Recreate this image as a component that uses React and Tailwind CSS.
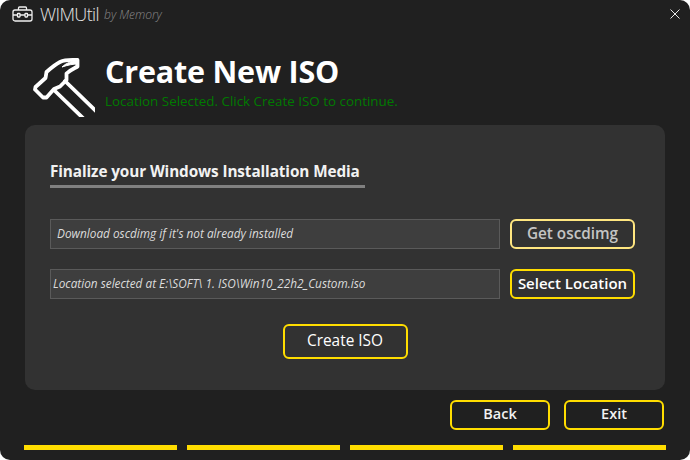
const font = { fontFamily: '"Open Sans", "Noto Sans", sans-serif' };

function Toolbox() {
  return (
    <svg className="mt-[-1px]" width="21" height="16" viewBox="0 0 21 16" fill="none" stroke="#f0f0f0" strokeWidth="1.3" strokeLinejoin="round">
      <rect x="1" y="4" width="19" height="11" rx="2" />
      <path d="M6.5 4V2a1 1 0 0 1 1-1h6a1 1 0 0 1 1 1V4" />
      <path d="M1 9h4.5M8 9h5M15.5 9H20" />
      <rect x="5.5" y="7.5" width="2.5" height="3.5" rx="0.5" />
      <rect x="13" y="7.5" width="2.5" height="3.5" rx="0.5" />
    </svg>
  );
}

function Hammer() {
  return (
    <svg className="block mt-[28px] shrink-0" width="65" height="61" viewBox="30 58 65 61" fill="none" stroke="#fff" strokeWidth="3.8" strokeLinejoin="round" strokeLinecap="round">
      <path d="M77.5 62 C70 61.5 64 62 60 64 C55 66.5 51 70 46.5 74 L45.5 80 L35.5 89 L35 91.5 L43 99.5 L46.5 99.5 L54 91 L60 88.5 L66.5 82 L66.5 75.5 C70 72 74 70.5 77.5 68.5 Z" />
      <path d="M77.5 62 C72 63 66 65 62 69 C68 67 73 66 77.5 66 Z" fill="#fff" strokeWidth="1" />
      <path d="M55 93 L85 122" />
      <path d="M65 83 L98 115" />
    </svg>
  );
}

function Btn({ children, className }) {
  return (
    <button className={"flex items-center justify-center rounded-[6px] border-2 font-semibold " + className} style={font}>
      {children}
    </button>
  );
}

export default function App() {
  return (
    <div className="w-[690px] h-[460px] bg-white overflow-hidden" style={font}>
      <div className="w-full h-full bg-[#202020] rounded-[10px] flex flex-col overflow-hidden">
        <div className="h-[28px] flex items-center pl-[12px] pr-[10px] shrink-0">
          <Toolbox />
          <span className="ml-[7px] text-[18px] font-light text-[#e4e4e4] tracking-[-0.6px]">WIMUtil</span>
          <span className="ml-[5px] mt-[2px] text-[12px] italic font-light text-[#8a8a8a]">by Memory</span>
          <svg className="ml-auto" width="10" height="10" viewBox="0 0 10 10" stroke="#e8e8e8" strokeWidth="1">
            <path d="M0.5 0.5L9.5 9.5M9.5 0.5L0.5 9.5" />
          </svg>
        </div>

        <div className="h-[97px] flex pl-[30px] shrink-0 overflow-hidden">
          <Hammer />
          <div className="ml-[10px] pt-[22px]">
            <h1 className="text-[30.5px] leading-[42px] font-bold text-white tracking-[-0.2px]">Create New ISO</h1>
            <p className="text-[13.4px] leading-[18px] text-[#007a00]">Location Selected. Click Create ISO to continue.</p>
          </div>
        </div>

        <div className="mx-[25px] h-[265px] shrink-0 rounded-[10px] bg-[#323232] px-[25px] pt-[36px]">
          <div className="w-[315px] h-[27px] border-b-[3px] border-[#808080] text-[15.3px] leading-[21px] font-bold text-[#f2f2f2] tracking-[-0.1px] whitespace-nowrap">
            Finalize your Windows Installation Media
          </div>

          <div className="mt-[31px] flex gap-[10px]">
            <div className="w-[450px] h-[30px] flex items-center pl-[6px] bg-[#3e3e3e] border border-[#5a5a5a] text-[11.8px] italic text-[#dcdcdc]">
              Download oscdimg if it's not already installed
            </div>
            <Btn className="w-[125px] h-[30px] pb-[2px] border-[#ffe680] bg-[#323232] text-[15.3px] text-[#c4c4c4]">Get oscdimg</Btn>
          </div>

          <div className="mt-[20px] flex gap-[10px]">
            <div className="w-[450px] h-[30px] flex items-center pl-[2px] bg-[#3e3e3e] border border-[#5a5a5a] text-[11.8px] italic text-[#dcdcdc]">
              Location selected at E:\SOFT\ 1. ISO\Win10_22h2_Custom.iso
            </div>
            <Btn className="w-[125px] h-[30px] pb-[2px] border-[#ffdd00] bg-[#323232] text-[15px] text-white whitespace-nowrap">Select Location</Btn>
          </div>

          <div className="mt-[25px] flex justify-center">
            <Btn className="w-[125px] h-[35px] pb-[1px] border-[#ffdd00] text-[15.4px] !font-medium text-white">Create ISO</Btn>
          </div>
        </div>

        <div className="mt-[10px] flex justify-end gap-[14px] pr-[26px] shrink-0">
          <Btn className="w-[100px] h-[30px] pb-[2px] border-[#ffdd00] text-[14.5px] text-[#f2f2f2]">Back</Btn>
          <Btn className="w-[100px] h-[30px] pb-[2px] border-[#ffdd00] text-[14.5px] text-[#f2f2f2]">Exit</Btn>
        </div>

        <div className="mt-[15px] mx-[24px] grid grid-cols-4 gap-[10px] shrink-0">
          <div className="h-[5px] bg-[#ffdd00]" />
          <div className="h-[5px] bg-[#ffdd00]" />
          <div className="h-[5px] bg-[#ffdd00]" />
          <div className="h-[5px] bg-[#ffdd00]" />
        </div>
      </div>
    </div>
  );
}
